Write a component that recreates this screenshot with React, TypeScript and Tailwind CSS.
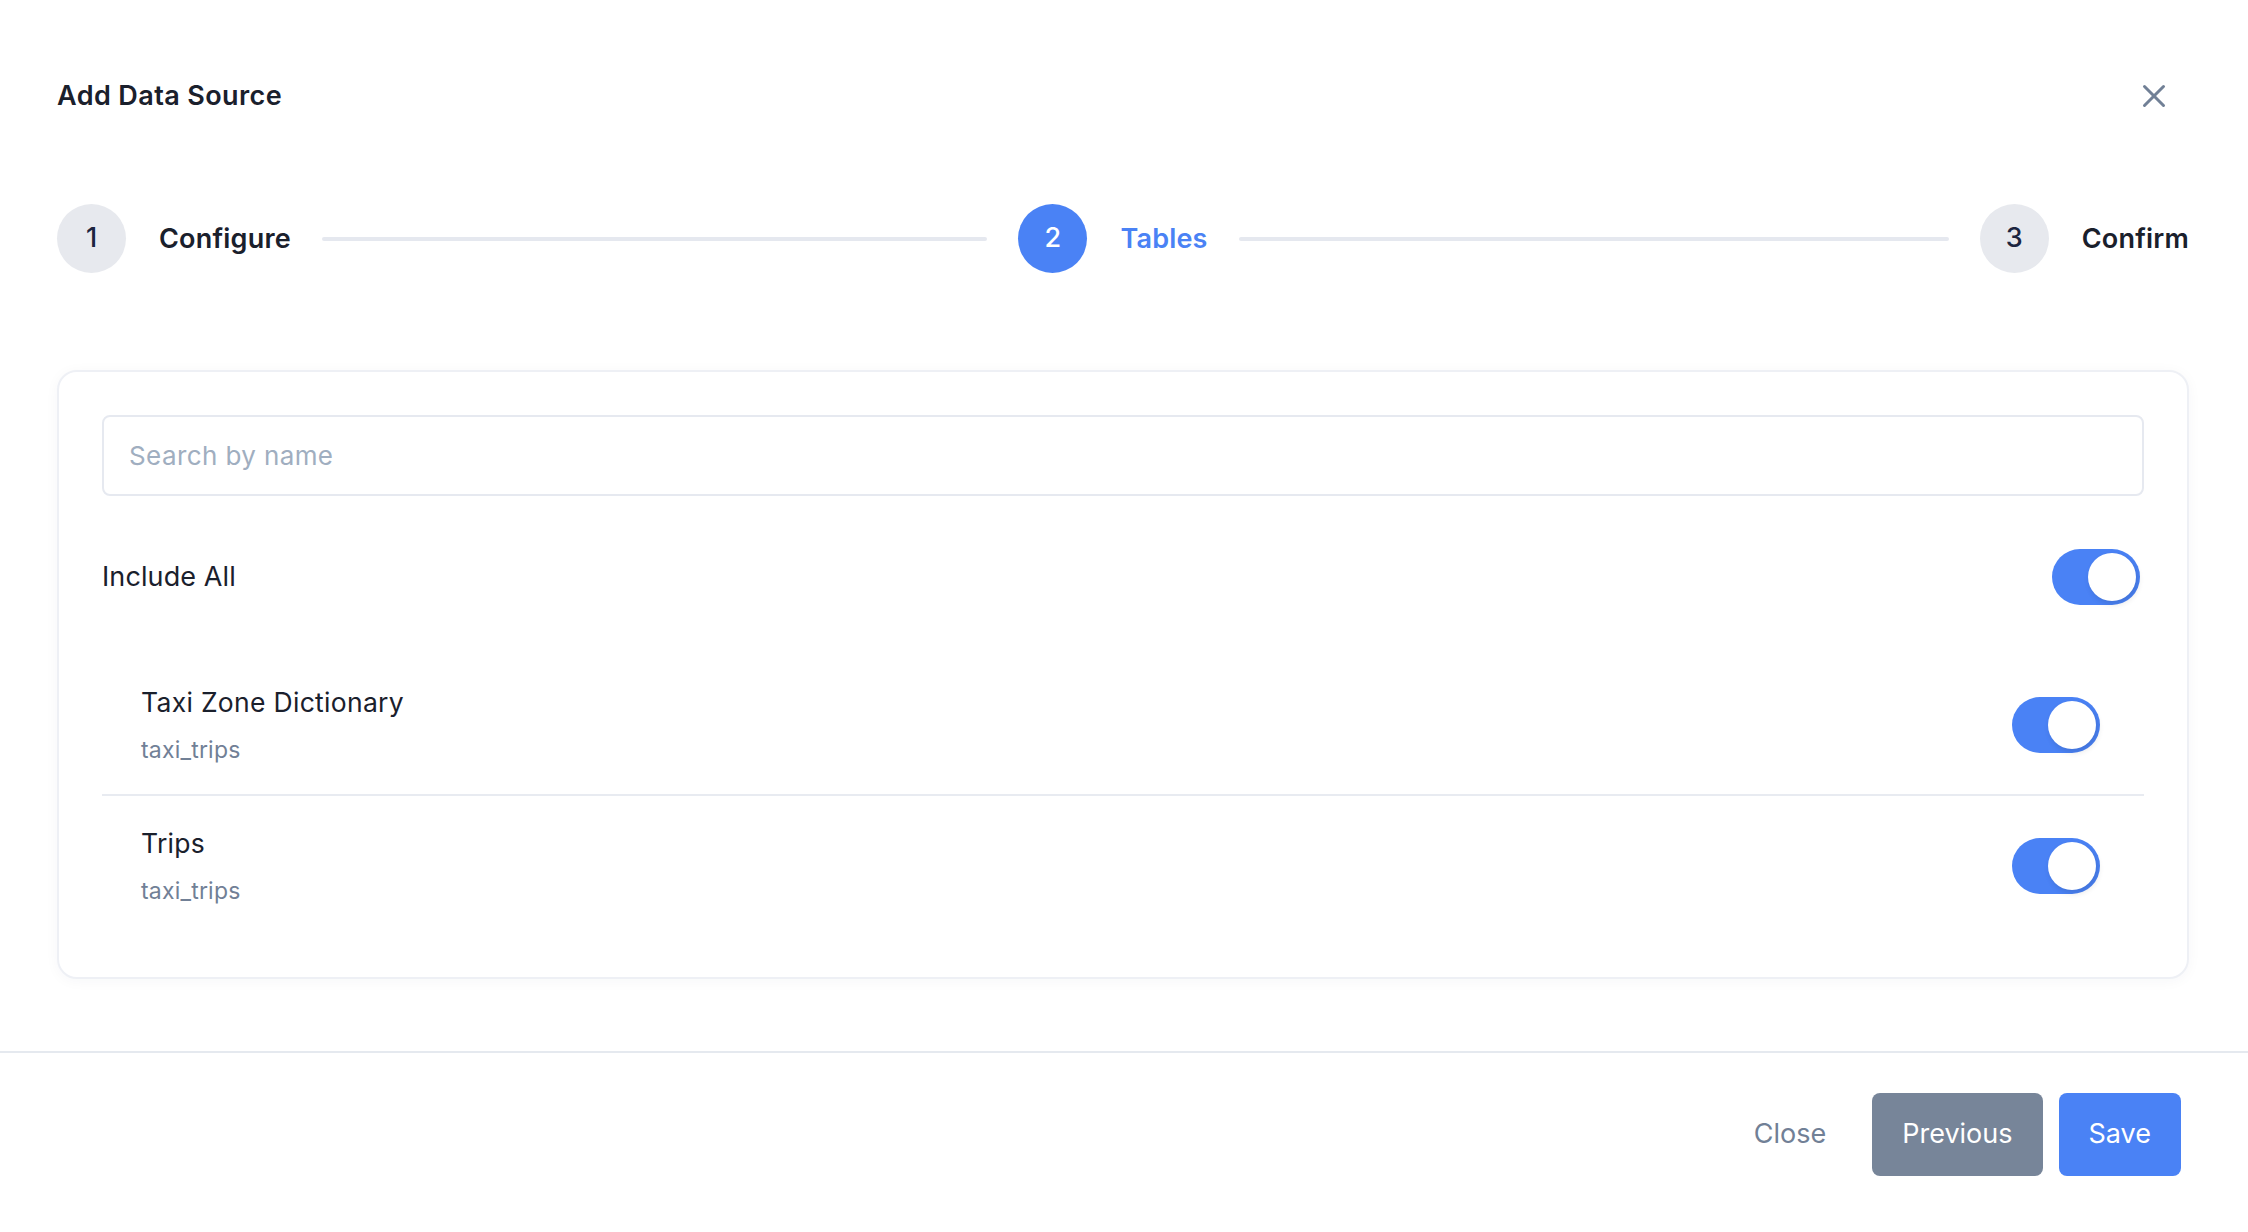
import React from "react";
import { X } from "lucide-react";

function Toggle() {
  return (
    <div className="flex h-[56px] w-[88px] shrink-0 items-center justify-end rounded-full bg-[#4a82f5] p-[4px]">
      <div className="h-[48px] w-[48px] rounded-full bg-white shadow-[2px_3px_6px_rgba(0,0,0,0.12)]" />
    </div>
  );
}

function Step({ n, label, active, last }: { n: number; label: string; active?: boolean; last?: boolean }) {
  return (
    <div className={last ? "flex shrink-0 items-center" : "flex flex-1 items-center"}>
      <div
        className={
          active
            ? "flex h-[69px] w-[69px] shrink-0 items-center justify-center rounded-full bg-[#4a82f5] text-[27px] font-medium text-white"
            : "flex h-[69px] w-[69px] shrink-0 items-center justify-center rounded-full bg-[#e7e9ee] text-[27px] font-medium text-[#1c2540]"
        }
      >
        {n}
      </div>
      <div
        className={
          active
            ? "ml-[33px] text-[27px] font-semibold leading-[36px] tracking-[0.2px] text-[#4a82f5]"
            : "ml-[33px] text-[27px] font-semibold leading-[36px] tracking-[0.2px] text-[#1a202c]"
        }
      >
        {label}
      </div>
      {!last && <div className="mx-[31px] h-[4px] flex-1 rounded-full bg-[#e5e8ef]" />}
    </div>
  );
}

function TableRow({ name, schema, first }: { name: string; schema: string; first?: boolean }) {
  return (
    <div
      className={
        first
          ? "flex items-center justify-between border-b-2 border-[#e8ebf1] pb-[28px] pl-[39px] pr-[44px] pt-[29px]"
          : "flex items-center justify-between pb-[29px] pl-[39px] pr-[44px] pt-[29px]"
      }
    >
      <div className="flex flex-col">
        <div className="text-[26.5px] leading-[36px] tracking-[0.3px] text-[#1a202c]">{name}</div>
        <div className="mt-[14px] text-[23px] leading-[32px] tracking-[0.2px] text-[#718096]">{schema}</div>
      </div>
      <Toggle />
    </div>
  );
}

export default function App() {
  return (
    <div className="min-h-[1232px] w-full bg-white font-['Inter','Liberation_Sans',sans-serif]">
      <div className="pl-[57px] pr-[59px] pt-[77px]">
        <div className="flex h-[38px] items-center justify-between">
          <h1 className="text-[27px] font-semibold leading-[36px] tracking-[0.4px] text-[#1a202c]">Add Data Source</h1>
          <button className="mr-[16px] flex h-[38px] w-[38px] items-center justify-center text-[#718096]">
            <X size={38} strokeWidth={1.9} />
          </button>
        </div>

        <div className="mt-[89px] flex items-center">
          <Step n={1} label="Configure" />
          <Step n={2} label="Tables" active />
          <Step n={3} label="Confirm" last />
        </div>

        <div className="mt-[97px] rounded-[20px] border-2 border-[#eef0f5] bg-white px-[43px] pb-[41px] pt-[43px] shadow-[0_2px_14px_rgba(30,40,70,0.04)]">
          <div className="flex h-[81px] items-center rounded-[8px] border-2 border-[#e6e9f0] px-[25px]">
            <input
              className="w-full bg-transparent text-[26px] tracking-[0.4px] text-[#1a202c] outline-none placeholder:text-[#a0aec0]"
              placeholder="Search by name"
            />
          </div>

          <div className="mt-[53px] flex items-center justify-between">
            <div className="text-[27px] leading-[36px] tracking-[0.1px] text-[#1a202c]">Include All</div>
            <div className="mr-[4px]">
              <Toggle />
            </div>
          </div>

          <div className="mt-[50px]">
            <TableRow name="Taxi Zone Dictionary" schema="taxi_trips" first />
            <TableRow name="Trips" schema="taxi_trips" />
          </div>
        </div>
      </div>

      <div className="mt-[72px] flex items-center justify-end gap-[16px] border-t-2 border-[#e5e9ef] pb-[56px] pr-[67px] pt-[40px]">
        <button className="h-[83px] rounded-[8px] px-[30px] text-[27px] text-[#718096]">Close</button>
        <button className="h-[83px] rounded-[8px] bg-[#778599] px-[30px] text-[27px] text-white">Previous</button>
        <button className="h-[83px] rounded-[8px] bg-[#4a82f5] px-[30px] text-[27px] text-white">Save</button>
      </div>
    </div>
  );
}
